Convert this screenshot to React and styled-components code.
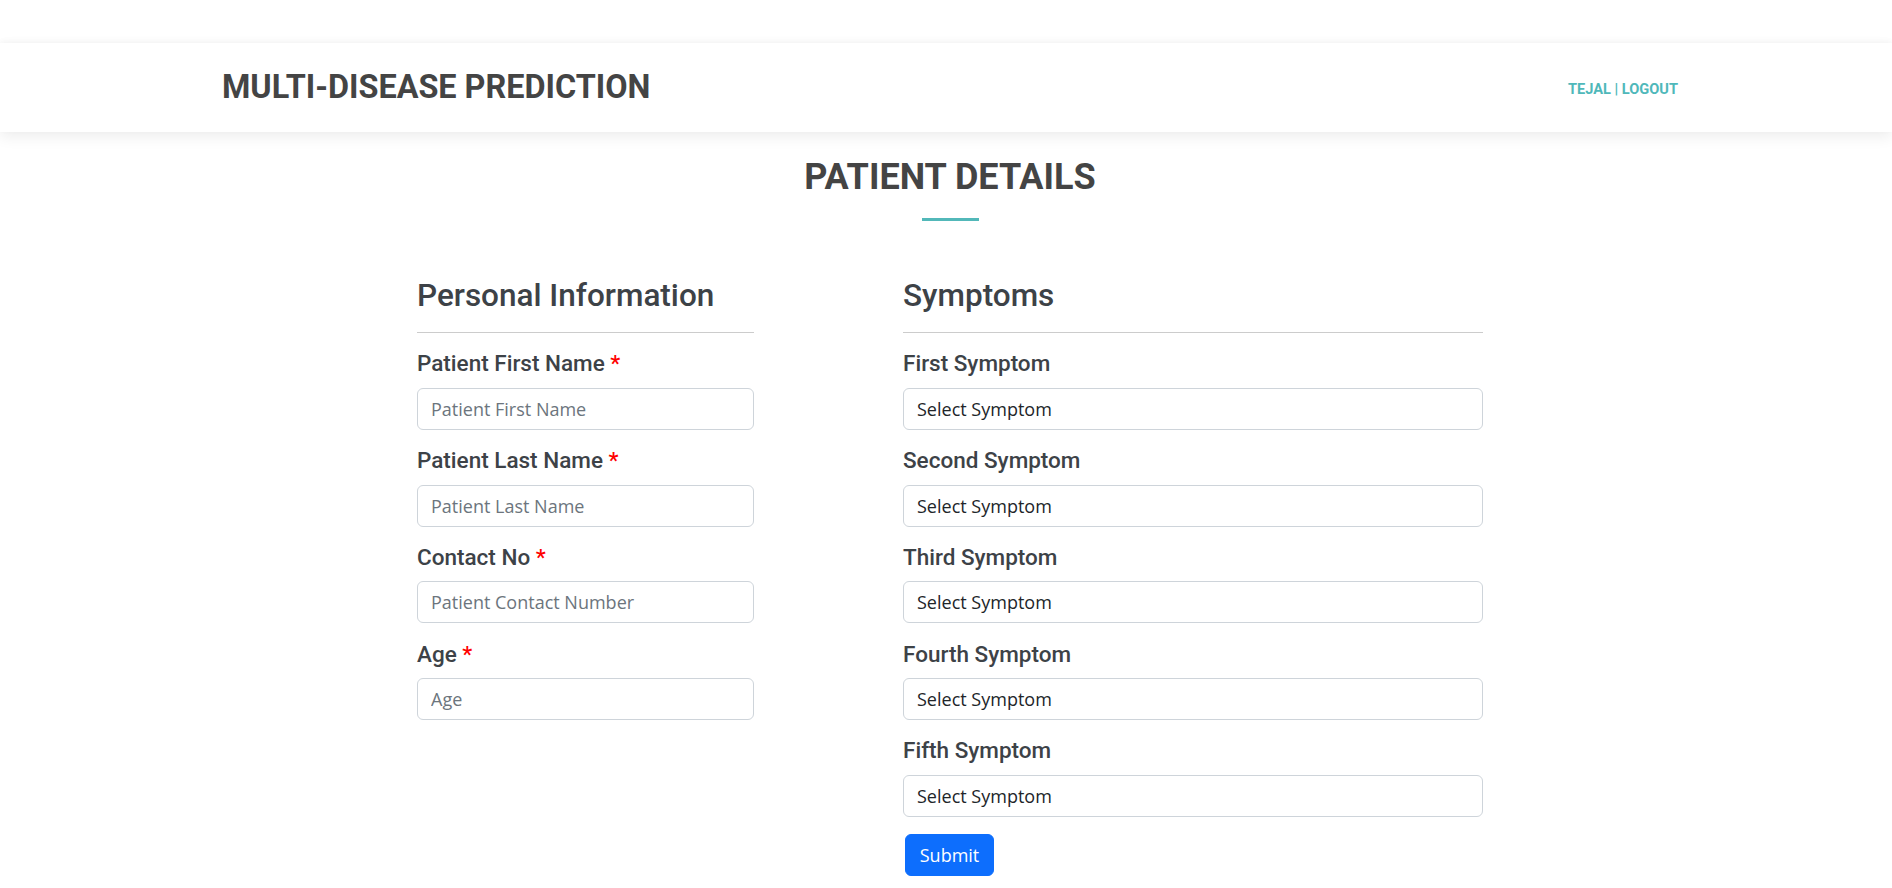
import styled, { createGlobalStyle } from "styled-components";

const GlobalStyle = createGlobalStyle`
  * {
    box-sizing: border-box;
  }
  body {
    margin: 0;
    background: #ffffff;
    font-family: Roboto, "Liberation Sans", sans-serif;
  }
`;

const Page = styled.div`
  padding-top: 43px;
  padding-bottom: 40px;
`;

const NavBar = styled.header`
  height: 89px;
  display: flex;
  align-items: center;
  justify-content: space-between;
  padding: 0 214px 0 222px;
  background: #ffffff;
  box-shadow: 0 5px 14px rgba(0, 0, 0, 0.07), 0 -2px 6px rgba(0, 0, 0, 0.03);
`;

const Brand = styled.h1`
  margin: 0;
  font-size: 32.4px;
  font-weight: 700;
  line-height: 1.2;
  color: #444444;
`;

const UserLinks = styled.a`
  font-size: 14.6px;
  font-weight: 700;
  color: #4fb8ba;
  text-decoration: none;
  margin-top: 2px;
`;

const Main = styled.main`
  display: flex;
  flex-direction: column;
  align-items: center;
  padding-left: 8px;
`;

const PageTitle = styled.h2`
  margin: 24px 0 0;
  font-size: 36px;
  font-weight: 700;
  line-height: 1.2;
  color: #444444;
`;

const TitleBar = styled.div`
  width: 57px;
  height: 3px;
  margin-top: 18.5px;
  background: #52b8b9;
`;

const Columns = styled.form`
  display: flex;
  align-items: flex-start;
  gap: 149px;
  margin-top: 56px;
`;

const Column = styled.section`
  width: ${(p) => p.$width}px;
  display: flex;
  flex-direction: column;
`;

const SectionTitle = styled.h3`
  margin: 0 0 18px;
  font-size: 31.5px;
  font-weight: 500;
  line-height: 1.2;
  color: #3d4247;
`;

const Divider = styled.hr`
  margin: 0 0 18px;
  border: 0;
  border-top: 1px solid #cccccc;
`;

const Fields = styled.div`
  display: flex;
  flex-direction: column;
  gap: 18.2px;
`;

const Field = styled.label`
  display: flex;
  flex-direction: column;
  gap: 11.5px;
`;

const LabelText = styled.span`
  font-size: 22.5px;
  font-weight: 500;
  line-height: 25px;
  color: #3d4247;
`;

const Required = styled.span`
  color: #ff0000;
`;

const controlStyles = `
  width: 100%;
  height: 42px;
  padding: 7px 13px;
  font-family: "Open Sans", "Noto Sans", sans-serif;
  font-size: 18px;
  line-height: 26px;
  color: #212529;
  background: #ffffff;
  border: 1px solid #ced4da;
  border-radius: 6px;
  outline: none;
`;

const TextInput = styled.input`
  ${controlStyles}
  &::placeholder {
    color: #6c757d;
  }
`;

const Select = styled.select`
  ${controlStyles}
  appearance: none;
  -webkit-appearance: none;
`;

const SubmitButton = styled.button`
  align-self: flex-start;
  margin: 17.5px 0 0 2px;
  height: 42px;
  width: 89px;
  padding: 0;
  font-family: "Open Sans", "Noto Sans", sans-serif;
  font-size: 18px;
  color: #ffffff;
  background: #0d6efd;
  border: 1px solid #0d6efd;
  border-radius: 6px;
  cursor: pointer;
`;

const personalFields = [
  { label: "Patient First Name", placeholder: "Patient First Name" },
  { label: "Patient Last Name", placeholder: "Patient Last Name" },
  { label: "Contact No", placeholder: "Patient Contact Number" },
  { label: "Age", placeholder: "Age" },
];

const symptomFields = ["First", "Second", "Third", "Fourth", "Fifth"];

const App = () => {
  return (
    <>
      <GlobalStyle />
      <Page>
        <NavBar>
          <Brand>MULTI-DISEASE PREDICTION</Brand>
          <UserLinks href="#">TEJAL | LOGOUT</UserLinks>
        </NavBar>
        <Main>
          <PageTitle>PATIENT DETAILS</PageTitle>
          <TitleBar />
          <Columns onSubmit={(e) => e.preventDefault()}>
            <Column $width={337}>
              <SectionTitle>Personal Information</SectionTitle>
              <Divider />
              <Fields>
                {personalFields.map((f) => (
                  <Field key={f.label}>
                    <LabelText>
                      {f.label} <Required>*</Required>
                    </LabelText>
                    <TextInput type="text" placeholder={f.placeholder} />
                  </Field>
                ))}
              </Fields>
            </Column>
            <Column $width={580}>
              <SectionTitle>Symptoms</SectionTitle>
              <Divider />
              <Fields>
                {symptomFields.map((n) => (
                  <Field key={n}>
                    <LabelText>{n} Symptom</LabelText>
                    <Select defaultValue="">
                      <option value="">Select Symptom</option>
                    </Select>
                  </Field>
                ))}
              </Fields>
              <SubmitButton type="submit">Submit</SubmitButton>
            </Column>
          </Columns>
        </Main>
      </Page>
    </>
  );
};

export default App;
